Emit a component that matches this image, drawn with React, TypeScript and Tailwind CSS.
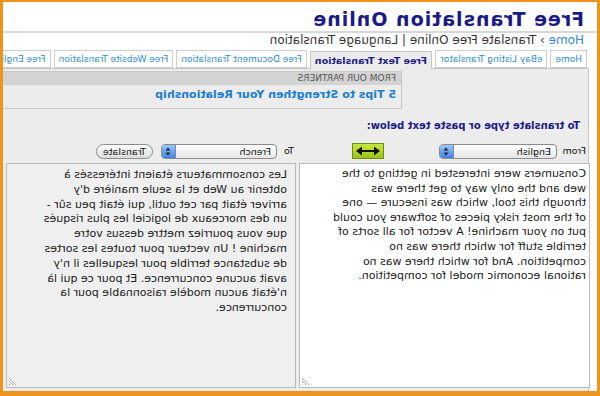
import React from "react";

const tabs = [
  { label: "Home" },
  { label: "eBay Listing Translator" },
  { label: "Free Text Translation", active: true },
  { label: "Free Document Translation" },
  { label: "Free Website Translation" },
  { label: "Free English Translation" },
];

const sourceLines = [
  "Consumers were interested in getting to the",
  "web and the only way to get there was",
  "through this tool, which was insecure — one",
  "of the most risky pieces of software you could",
  "put on your machine! A vector for all sorts of",
  "terrible stuff for which there was no",
  "competition. And for which there was no",
  "rational economic model for competition.",
];

const targetLines = [
  "Les consommateurs étaient intéressés à",
  "obtenir au Web et la seule manière d'y",
  "arriver était par cet outil, qui était peu sûr -",
  "un des morceaux de logiciel les plus risqués",
  "que vous pourriez mettre dessus votre",
  "machine ! Un vecteur pour toutes les sortes",
  "de substance terrible pour lesquelles il n'y",
  "avait aucune concurrence. Et pour ce qui là",
  "n'était aucun modèle raisonnable pour la",
  "concurrence.",
];

function Select({ value, width }: { value: string; width: string }) {
  return (
    <div
      className={`${width} h-[15px] flex items-stretch rounded-[4px] border border-[#8c8c8c] bg-gradient-to-b from-white to-[#e6e6e6] overflow-hidden`}
    >
      <span className="flex-1 pl-[5px] text-[9.5px] leading-[13px] text-[#111]">{value}</span>
      <span className="w-[14px] flex items-center justify-center bg-gradient-to-b from-[#9cc6f7] to-[#3f83dc] border-l border-[#6b8fc0]">
        <svg width="6" height="9" viewBox="0 0 6 9">
          <path d="M3 0.5L5.5 3.5H0.5Z M3 8.5L0.5 5.5H5.5Z" fill="#1a2a44" />
        </svg>
      </span>
    </div>
  );
}

function Grip() {
  return (
    <svg className="absolute right-[1px] bottom-[1px]" width="9" height="9" viewBox="0 0 9 9">
      <path d="M8 1L1 8M8 4L4 8M8 7L7 8" stroke="#9a9a9a" strokeWidth="0.8" />
    </svg>
  );
}

export default function App() {
  return (
    <div className="w-[600px] h-[396px] overflow-hidden -scale-x-100 bg-white border-[#f0921e] border-x-[3px] border-t-[2px] border-b-[5px] font-['DejaVu_Sans',Verdana,sans-serif] flex flex-col">
      <h1 className="pl-[13px] pt-[6px] text-[19px] leading-[23px] font-bold tracking-[1px] text-[#1c1a86]">
        Free Translation Online
      </h1>
      <div className="h-[2px] bg-[#d8d8d8]" />
      <div className="pl-[13px] mt-[1px] text-[12px] leading-[12px] text-[#333]">
        <span className="text-[#3a86d4]">Home</span> › Translate Free Online | Language Translation
      </div>

      <div className="mt-[4px] pl-[10px] flex items-end gap-[3px] h-[18px] whitespace-nowrap">
        {tabs.map((t) =>
          t.active ? (
            <div
              key={t.label}
              className="h-[18px] px-[4px] bg-[#ececec] border border-b-0 border-[#c4c4c4] text-[9.5px] leading-[17px] font-bold text-[#1c1a86] relative z-10 -mb-px"
            >
              {t.label}
            </div>
          ) : (
            <div
              key={t.label}
              className="h-[18px] px-[4px] bg-white border border-[#cfcfcf] text-[9px] leading-[16px] text-[#2f8ad2]"
            >
              {t.label}
            </div>
          )
        )}
      </div>

      <div className="flex-1 ml-[8px] bg-[#ececec] border-l border-t border-[#c4c4c4] flex flex-col">
        <div className="mt-[2px] ml-[186px] border border-r-0 border-[#c8c8c8]">
          <div className="h-[13px] bg-[#d3d3d3] pl-[5px] text-[9px] leading-[13px] text-[#555] uppercase">
            From our partners
          </div>
          <div className="h-[23px] pl-[5px] text-[11px] leading-[19px] font-bold text-[#1b7dcc]">
            5 Tips to Strengthen Your Relationship
          </div>
        </div>

        <div className="mt-[11px] pl-[8px] text-[10px] leading-[12px] font-bold text-[#1c1a86]">
          To translate type or paste text below:
        </div>

        <div className="mt-[11px] flex items-center h-[16px] pl-[2px]">
          <span className="text-[9.5px] text-[#111] w-[29px]">From</span>
          <Select value="English" width="w-[118px]" />
          <button className="ml-[55px] w-[32px] h-[16px] bg-gradient-to-b from-[#c6e83e] to-[#9cc416] border border-[#6d8c10] flex items-center justify-center">
            <svg width="26" height="10" viewBox="0 0 26 10">
              <path d="M2 5H24" stroke="#111" strokeWidth="2" />
              <path d="M1 5L7 0.5V9.5Z M25 5L19 0.5V9.5Z" fill="#111" />
            </svg>
          </button>
          <span className="ml-[58px] text-[9.5px] text-[#111] w-[17px]">To</span>
          <Select value="French" width="w-[116px]" />
          <button className="ml-[8px] w-[57px] h-[15px] rounded-full border border-[#8c8c8c] bg-gradient-to-b from-white to-[#dcdcdc] text-[9.5px] leading-[13px] text-[#111]">
            Translate
          </button>
        </div>

        <div className="mt-[4px] flex gap-[3px] h-[225px] -ml-[2px]">
          <div className="relative w-[291px] bg-white border border-[#b9b9b9] pl-[3px] pt-[3px] text-[11px] leading-[14.6px] text-[#1a1a1a] whitespace-nowrap">
            {sourceLines.map((l) => (
              <div key={l}>{l}</div>
            ))}
            <Grip />
          </div>
          <div className="relative w-[290px] bg-[#efefef] border border-[#b9b9b9] pl-[8px] pt-[4px] text-[11px] leading-[14.8px] text-[#1a1a1a] whitespace-nowrap">
            {targetLines.map((l) => (
              <div key={l}>{l}</div>
            ))}
            <Grip />
          </div>
        </div>
      </div>
    </div>
  );
}
